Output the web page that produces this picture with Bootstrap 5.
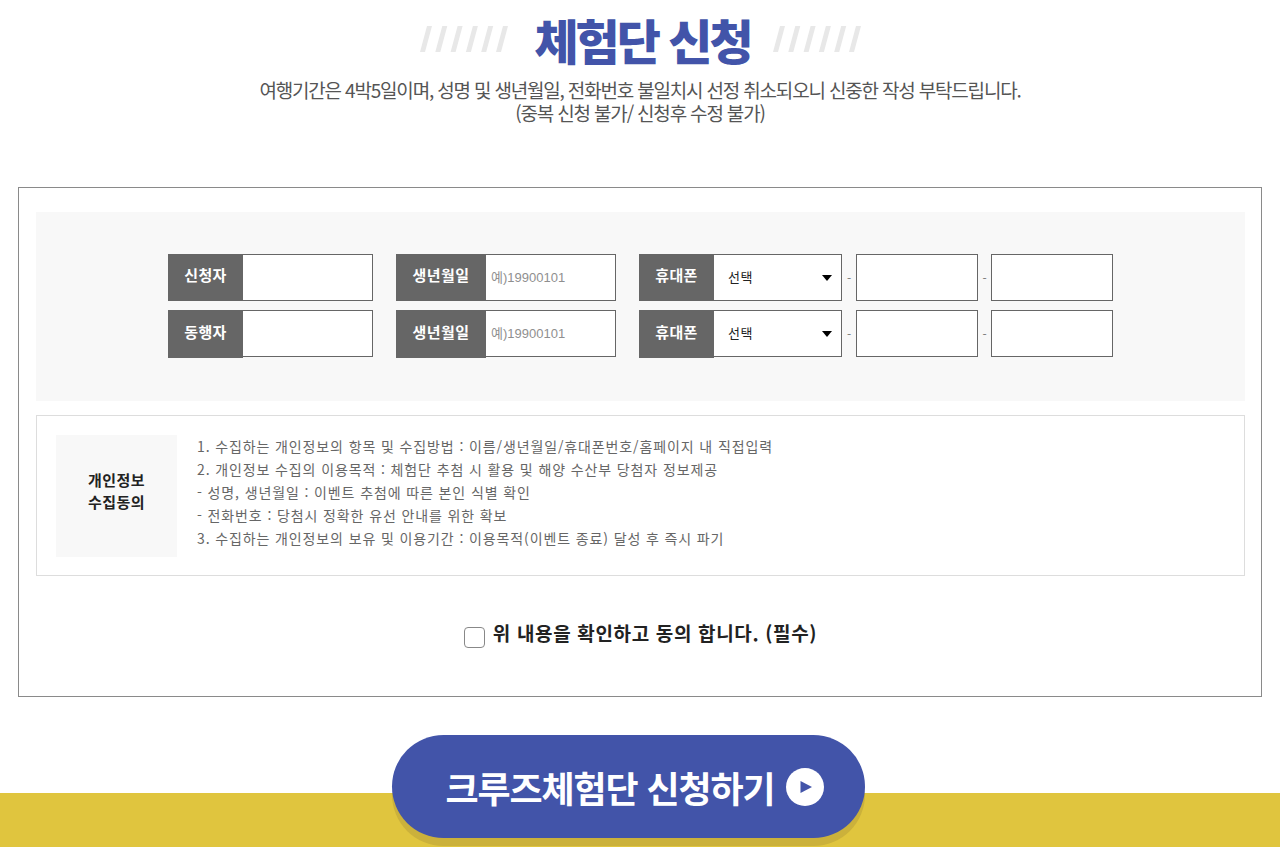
<!DOCTYPE html>
<html lang="ko">
<head>
<meta charset="utf-8">
<title>체험단 신청</title>
<link href="https://cdn.jsdelivr.net/npm/bootstrap@5.3.0/dist/css/bootstrap.min.css" rel="stylesheet">
<style>
html,body{height:847px;overflow:hidden;background:#fff}
body{font-family:"Noto Sans CJK KR","Liberation Sans",sans-serif;color:#222}
.hero{height:187px;padding-top:10px}
.hero-head{height:58px}
.hero-title{font-size:48px;font-weight:900;letter-spacing:-3px;line-height:58px;color:#4254a9;margin:0 21px 0 26px;width:218px;white-space:nowrap}
.hero-desc{font-size:19px;letter-spacing:-1.18px;line-height:23px;color:#555;margin:10px 0 0}
.frame{margin:0 18px;height:510px;border:1px solid #8a8a8a;padding:24px 16px 0 17px}
.form-zone{background:#f8f8f8;height:189px;padding-top:42px;gap:9px}
.form-line{height:47px}
.tag{background:#666;color:#fff;font-size:15px;font-weight:700;letter-spacing:.4px;height:47px;line-height:42px;text-align:center;flex:none}
.tag-s{width:75px}
.tag-m{width:90px}
.tag-low{height:48px;line-height:44px;align-self:flex-start}
.field{border:1px solid #666;border-left:0;border-radius:0;height:47px;padding:0 5px;font-family:"Liberation Sans","Noto Sans CJK KR",sans-serif;font-size:13px;box-shadow:none;flex:none}
.field::placeholder{color:#8f8f8f;opacity:1}
.w-a{width:130px;margin-right:23px}
.w-b{width:130px;margin-right:23px}
.pick{width:128px;height:47px;border:1px solid #666;border-left:0;border-radius:0;font-family:"Noto Sans CJK KR",sans-serif;font-size:13px;letter-spacing:.6px;line-height:43px;color:#222;padding:0 14px 2px;flex:none;box-shadow:none;background-size:12px 8px;background-position:right 8px center;background-image:url("data:image/svg+xml,%3Csvg xmlns='http://www.w3.org/2000/svg' viewBox='0 0 12 8'%3E%3Cpath d='M1 1h10L6 7z' fill='%23000'/%3E%3C/svg%3E")}
.dash{width:14px;text-align:center;color:#777;font-size:12px;flex:none}
.num{width:122px;border-left:1px solid #666}
.dash-b{width:13px}
.agree{margin-top:14px;height:161px;border:1px solid #ddd;padding:19px;gap:20px}
.agree-head{width:121px;height:122px;background:#f8f8f8;font-size:15px;letter-spacing:.4px;font-weight:700;line-height:22px;color:#222;flex:none;padding-bottom:10px}
.agree-text{font-size:14px;letter-spacing:.88px;line-height:23px;color:#666;margin:0}
.check-line{height:120px;gap:8px;padding-bottom:6px}
.tick{width:21px;height:21px;margin:8px 0 0;border:1px solid #888;border-radius:3px;flex:none}
.check-line label{font-size:19px;letter-spacing:.65px;font-weight:700;color:#222;line-height:24px}
.cta-zone{margin-top:38px;position:relative}
.cta{width:473px;height:103px;border:0;border-radius:52px;background:#4254a9;color:#fff;font-size:36px;font-weight:700;letter-spacing:-1.1px;gap:11px;padding:0 0 0 12px;box-shadow:0 8px 0 rgba(60,50,40,.13);margin:0 0 -45px 392px;position:relative;z-index:1}
.cta:hover{background:#4254a9;color:#fff}
.band{height:54px;background:#e0c53e}
</style>
</head>
<body>
<header class="hero text-center">
  <div class="hero-head d-flex justify-content-center align-items-center">
    <svg width="88" height="26" viewBox="0 0 88 26" aria-hidden="true"><path fill="#e8e8e8" d="M0 26h5L12 0H7zM15.300 26h5l7-26h-5zM30.600 26h5l7-26h-5zM45.900 26h5l7-26h-5zM61.200 26h5l7-26h-5zM76 26h5l7-26h-5z"/></svg>
    <h1 class="hero-title">체험단 신청</h1>
    <svg width="88" height="26" viewBox="0 0 88 26" aria-hidden="true"><path fill="#e8e8e8" d="M0 26h5L12 0H7zM15.300 26h5l7-26h-5zM30.600 26h5l7-26h-5zM45.900 26h5l7-26h-5zM61.200 26h5l7-26h-5zM76 26h5l7-26h-5z"/></svg>
  </div>
  <p class="hero-desc">여행기간은 4박5일이며, 성명 및 생년월일, 전화번호 불일치시 선정 취소되오니 신중한 작성 부탁드립니다.<br>(중복 신청 불가/ 신청후 수정 불가)</p>
</header>
<main class="frame">
  <div class="form-zone d-flex flex-column">
    <div class="form-line d-flex justify-content-center align-items-center">
      <span class="tag tag-s">신청자</span><input class="form-control field w-a" type="text" aria-label="신청자">
      <span class="tag tag-m">생년월일</span><input class="form-control field w-b" type="text" placeholder="예)19900101" aria-label="생년월일">
      <span class="tag tag-s">휴대폰</span><select class="form-select pick" aria-label="휴대폰"><option>선택</option></select>
      <span class="dash">-</span><input class="form-control field num" type="text" aria-label="가운데 번호"><span class="dash dash-b">-</span><input class="form-control field num" type="text" aria-label="끝 번호">
    </div>
    <div class="form-line d-flex justify-content-center align-items-center">
      <span class="tag tag-s tag-low">동행자</span><input class="form-control field w-a" type="text" aria-label="동행자">
      <span class="tag tag-m tag-low">생년월일</span><input class="form-control field w-b" type="text" placeholder="예)19900101" aria-label="생년월일">
      <span class="tag tag-s tag-low">휴대폰</span><select class="form-select pick" aria-label="휴대폰"><option>선택</option></select>
      <span class="dash">-</span><input class="form-control field num" type="text" aria-label="가운데 번호"><span class="dash dash-b">-</span><input class="form-control field num" type="text" aria-label="끝 번호">
    </div>
  </div>
  <section class="agree d-flex">
    <div class="agree-head d-flex align-items-center justify-content-center text-center">개인정보<br>수집동의</div>
    <p class="agree-text">1. 수집하는 개인정보의 항목 및 수집방법 : 이름/생년월일/휴대폰번호/홈페이지 내 직접입력<br>2. 개인정보 수집의 이용목적 : 체험단 추첨 시 활용 및 해양 수산부 당첨자 정보제공<br>- 성명, 생년월일 : 이벤트 추첨에 따른 본인 식별 확인<br>- 전화번호 : 당첨시 정확한 유선 안내를 위한 확보<br>3. 수집하는 개인정보의 보유 및 이용기간 : 이용목적(이벤트 종료) 달성 후 즉시 파기</p>
  </section>
  <div class="check-line d-flex justify-content-center align-items-center">
    <input class="form-check-input tick" type="checkbox" id="agreeCheck">
    <label for="agreeCheck">위 내용을 확인하고 동의 합니다. (필수)</label>
  </div>
</main>
<div class="cta-zone">
  <button type="button" class="btn cta d-flex align-items-center justify-content-center">크루즈체험단 신청하기
    <svg width="38" height="38" viewBox="0 0 38 38" aria-hidden="true"><circle cx="19" cy="19" r="19" fill="#fff"/><path d="M14.500 13L26 19 14.500 25z" fill="#4254a9"/></svg>
  </button>
  <div class="band"></div>
</div>
<script src="https://cdn.jsdelivr.net/npm/bootstrap@5.3.0/dist/js/bootstrap.bundle.min.js"></script>
</body>
</html>
